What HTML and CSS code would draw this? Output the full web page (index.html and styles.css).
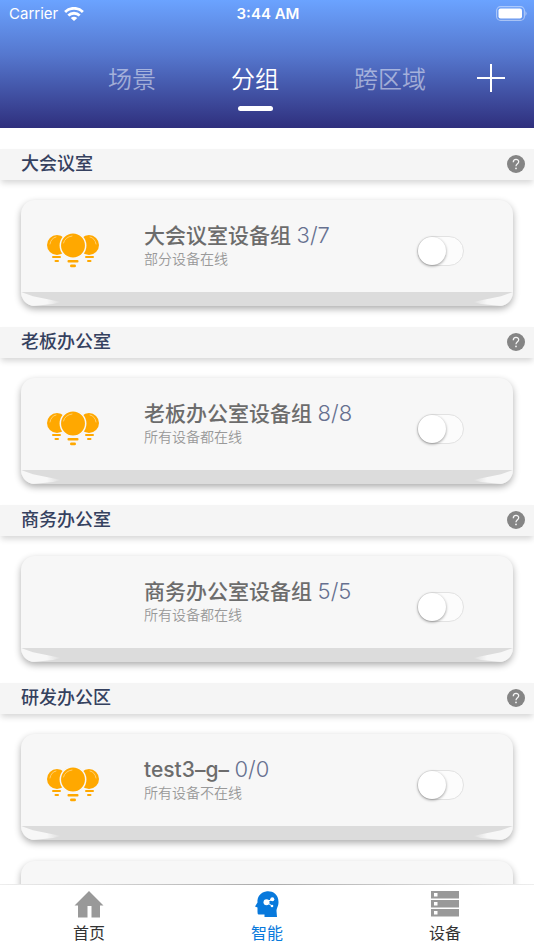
FILE: index.html
```html
<!DOCTYPE html>
<html lang="zh-CN">
<head>
<meta charset="utf-8">
<meta name="viewport" content="width=device-width, initial-scale=1">
<title>分组</title>
<link rel="stylesheet" href="styles.css">
</head>
<body>
<svg class="sprite" aria-hidden="true">
  <symbol id="bulbs" viewBox="0 0 52 36">
    <g fill="#ffa800">
      <circle cx="10" cy="12" r="10"/><circle cx="42" cy="12" r="10"/>
      <rect x="5" y="23" width="9" height="2" rx="1"/><rect x="7.500" y="27" width="4.500" height="2" rx="1"/>
      <rect x="38" y="23" width="9" height="2" rx="1"/><rect x="40" y="27" width="4.500" height="2" rx="1"/>
      <circle cx="26" cy="12.500" r="12.700" stroke="#f7f7f7" stroke-width="1.500"/>
      <rect x="20.500" y="27" width="11" height="2.500" rx="1"/><rect x="23" y="31.500" width="6" height="2.800" rx="1.400"/>
    </g>
    <g fill="none" stroke="#ffd98a" stroke-width=".8" stroke-linecap="round">
      <path d="M3 11Q4 5 9 4"/><path d="M16.500 10Q18 4 25 3"/><path d="M43 4Q48 5 49 11"/>
    </g>
  </symbol>
  <symbol id="help" viewBox="0 0 18 18">
    <circle cx="9" cy="9" r="9" fill="#858585"/>
    <path d="M6.300 7.200C6.300 3.300 11.700 3.500 11.700 6.800C11.700 8.700 9 8.900 9 11.200" fill="none" stroke="#f5f5f5" stroke-width="1.300"/>
    <circle cx="9" cy="13.400" r=".9" fill="#f5f5f5"/>
  </symbol>
</svg>

<header class="header">
  <div class="status">
    <div class="carrier">
      <span>Carrier</span>
      <svg width="20" height="14" viewBox="0 0 20 14" aria-hidden="true">
        <g fill="none" stroke="#fff" stroke-width="2.800"><path d="M1.100 4.900C6 .1 14 .1 18.900 4.900"/><path d="M4.300 8.500C7.500 5.500 12.500 5.500 15.700 8.500"/></g>
        <path d="M6.700 11Q10 8.500 13.300 11L10 14Z" fill="#fff"/>
      </svg>
    </div>
    <div class="time">3:44 AM</div>
    <svg class="battery" width="32" height="15" viewBox="0 0 32 15" aria-hidden="true">
      <rect x="1.600" y=".6" width="27.800" height="13.800" rx="4" fill="none" stroke="#fff" stroke-opacity=".45" stroke-width="1.100"/>
      <rect x="3.500" y="2.500" width="23.500" height="10" rx="2" fill="#fff"/>
      <path d="M30.500 5Q32.500 7.500 30.500 10Z" fill="#fff" fill-opacity=".55"/>
    </svg>
  </div>
  <nav class="tabs">
    <a class="tab" href="#scene">场景</a>
    <a class="tab tab-active" href="#group" aria-current="page">分组</a>
    <a class="tab" href="#cross">跨区域</a>
    <button class="add" type="button" aria-label="添加">
      <svg width="28" height="28" viewBox="0 0 28 28" aria-hidden="true"><path d="M14 0V28M0 14H28" stroke="#fff" stroke-width="2"/></svg>
    </button>
  </nav>
</header>

<main class="content">
  <section class="room">
    <div class="room-head"><h2>大会议室</h2><button class="help" type="button" aria-label="帮助"><svg><use href="#help"/></svg></button></div>
    <article class="card">
      <div class="card-body">
        <div class="icon"><svg aria-hidden="true"><use href="#bulbs"/></svg></div>
        <div class="info"><h3>大会议室设备组 <span class="count">3/7</span></h3><p>部分设备在线</p></div>
        <input class="switch" type="checkbox" role="switch" aria-label="大会议室设备组">
      </div>
      <div class="card-foot"></div>
    </article>
  </section>
  <section class="room">
    <div class="room-head"><h2>老板办公室</h2><button class="help" type="button" aria-label="帮助"><svg><use href="#help"/></svg></button></div>
    <article class="card">
      <div class="card-body">
        <div class="icon"><svg aria-hidden="true"><use href="#bulbs"/></svg></div>
        <div class="info"><h3>老板办公室设备组 <span class="count">8/8</span></h3><p>所有设备都在线</p></div>
        <input class="switch" type="checkbox" role="switch" aria-label="老板办公室设备组">
      </div>
      <div class="card-foot"></div>
    </article>
  </section>
  <section class="room">
    <div class="room-head"><h2>商务办公室</h2><button class="help" type="button" aria-label="帮助"><svg><use href="#help"/></svg></button></div>
    <article class="card">
      <div class="card-body">
        <div class="icon"></div>
        <div class="info"><h3>商务办公室设备组 <span class="count">5/5</span></h3><p>所有设备都在线</p></div>
        <input class="switch" type="checkbox" role="switch" aria-label="商务办公室设备组">
      </div>
      <div class="card-foot"></div>
    </article>
  </section>
  <section class="room">
    <div class="room-head"><h2>研发办公区</h2><button class="help" type="button" aria-label="帮助"><svg><use href="#help"/></svg></button></div>
    <article class="card">
      <div class="card-body">
        <div class="icon"><svg aria-hidden="true"><use href="#bulbs"/></svg></div>
        <div class="info"><h3>test3–g– <span class="count">0/0</span></h3><p>所有设备不在线</p></div>
        <input class="switch" type="checkbox" role="switch" aria-label="test3–g–">
      </div>
      <div class="card-foot"></div>
    </article>
    <article class="card">
      <div class="card-body"></div>
      <div class="card-foot"></div>
    </article>
  </section>
</main>

<nav class="bottom">
  <a href="#home">
    <svg width="30" height="28" viewBox="0 0 30 28" aria-hidden="true"><path d="M15 1L29.500 15.500H26V27.500H17.500V16H13.500V27.500H4V15.500H.5Z" fill="#999"/></svg>
    <span>首页</span>
  </a>
  <a class="current" href="#smart" aria-current="page">
    <svg width="30" height="28" viewBox="0 0 30 28" aria-hidden="true">
      <path d="M14 1.500C19 .5 26.500 3 26.500 12C26.500 16.500 24.500 18 24.500 21L25 27H12.500V24.500H6.500Q5.500 24.500 5.500 22V17.500L3 16.500L5.500 12.500C5 7 8.500 2.500 14 1.500Z" fill="#0879dc"/>
      <g stroke="#fff" stroke-width="1"><path d="M14.500 12L20.500 9L14.500 12L20 16"/></g>
      <g fill="#fff"><circle cx="14.500" cy="12.300" r="3"/><circle cx="20.300" cy="9.200" r="2"/><circle cx="20" cy="16" r="1.300"/></g>
    </svg>
    <span>智能</span>
  </a>
  <a href="#devices">
    <svg width="30" height="28" viewBox="0 0 30 28" aria-hidden="true">
      <path d="M1 1H29V8.500H1ZM1 10H29V17.500H1ZM1 19H29V26.500H1Z" fill="#999"/>
      <path d="M4 3H7.500V6.500H4ZM4 12H7.500V15.500H4ZM4 21H7.500V24.500H4Z" fill="#fff"/>
    </svg>
    <span>设备</span>
  </a>
</nav>
</body>
</html>
```
FILE: styles.css
```css
* { box-sizing: border-box; }

body {
  margin: 0;
  height: 100vh;
  display: flex;
  flex-direction: column;
  background: #fff;
  font-family: Inter, "Noto Sans CJK SC", sans-serif;
}

h2, h3, p { margin: 0; }
a { text-decoration: none; color: inherit; }
button { padding: 0; border: 0; background: none; cursor: pointer; }
.sprite { position: absolute; width: 0; height: 0; }

.header {
  flex: none;
  height: 128px;
  color: #fff;
  background: linear-gradient(#6ba3ff, #5577ce 43%, #2f2f7d);
}

.status {
  display: grid;
  grid-template-columns: 1fr auto 1fr;
  align-items: center;
  height: 27px;
  padding: 0 7px 0 9px;
  font-size: 15px;
}
.carrier { display: flex; align-items: center; gap: 6px; }
.time { font-weight: 600; }
.battery { justify-self: end; }

.tabs {
  position: relative;
  display: flex;
  justify-content: center;
  gap: 75px;
  padding-top: 33px;
}
.tab {
  font-size: 24px;
  line-height: 40px;
  font-weight: 350;
  color: rgba(255, 255, 255, .5);
}
.tab-active { color: #fff; }
.tab-active::after {
  content: "";
  display: block;
  width: 35px;
  height: 5px;
  margin: 6px auto 0;
  border-radius: 3px;
  background: #fff;
}
.add { position: absolute; right: 29px; top: 37px; height: 28px; }
.add svg { display: block; }

.content {
  flex: 1;
  min-height: 0;
  overflow-y: auto;
  scrollbar-width: none;
  padding-top: 21px;
}

.room-head {
  display: flex;
  align-items: center;
  justify-content: space-between;
  height: 31px;
  padding: 0 9px 1px 21px;
  background: #f5f5f5;
  box-shadow: 0 4px 6px -1px rgba(0, 0, 0, .16);
}
.room-head h2 { font-size: 18px; line-height: 30px; font-weight: 500; color: #35415f; }
.help, .help svg { display: block; width: 18px; height: 18px; }

.card {
  margin: 20px 21px 21px;
  overflow: hidden;
  border-radius: 14px;
  background: #f7f7f7;
  box-shadow: 0 3px 7px rgba(0, 0, 0, .32);
}
.card-body {
  display: grid;
  grid-template-columns: 123px 1fr 47px;
  height: 92px;
  padding-right: 49px;
}
.icon { padding: 33px 0 0 26px; }
.icon svg { display: block; width: 52px; height: 36px; }
.info { padding-top: 20px; }
.info h3 { font-size: 21px; line-height: 30px; font-weight: 500; color: #6c6c6c; white-space: nowrap; }
.count { font-size: 22px; font-weight: 300; color: #66708f; }
.info p { font-size: 14px; line-height: 16px; font-weight: 350; color: #999; }

.switch {
  appearance: none;
  width: 47px;
  height: 30px;
  margin: 36px 0 0;
  border: 1px solid #e2e2e2;
  border-radius: 15px;
  background: #fcfcfc;
}
.switch::before {
  content: "";
  display: block;
  width: 28px;
  height: 28px;
  border-radius: 50%;
  background: #fff;
  box-shadow: 0 1px 3px rgba(0, 0, 0, .4);
}
.switch:checked { background: #0879dc; }
.switch:checked::before { margin-left: auto; }

.card-foot {
  display: flex;
  justify-content: space-between;
  height: 14px;
  background: #dcdcdc;
}
.card-foot::before, .card-foot::after {
  content: "";
  width: 40px;
  background: linear-gradient(90deg, #f7f7f7 65%, #dcdcdc);
  clip-path: polygon(0 0, 30% 30%, 70% 53%, 100% 72%, 80% 85%, 30% 100%, 0 100%);
}
.card-foot::after { transform: scaleX(-1); }

.bottom {
  position: relative;
  flex: none;
  display: grid;
  grid-template-columns: repeat(3, 1fr);
  height: 66px;
  background: #fff;
  color: #333;
}
.bottom::before {
  content: "";
  position: absolute;
  inset: 0 0 auto;
  height: 1px;
  background: linear-gradient(90deg, #eee, #aaa 50%, #eee);
}
.bottom a { display: flex; flex-direction: column; align-items: center; padding-top: 6px; font-size: 16px; line-height: 30px; }
.bottom .current { color: #0879dc; }
```
